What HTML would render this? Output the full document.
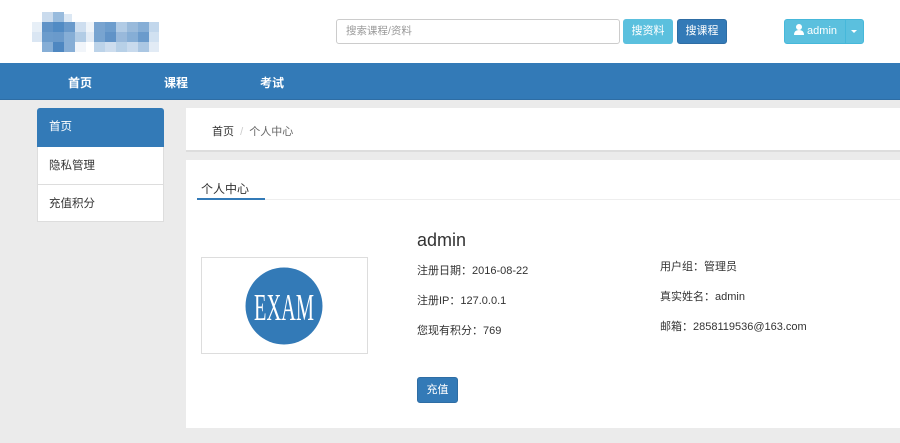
<!DOCTYPE html>
<html><head><meta charset="utf-8"><style>
*{box-sizing:border-box;margin:0;padding:0}
body{width:900px;height:443px;overflow:hidden;background:#ebebeb;font-family:"Liberation Sans","Noto Sans CJK SC",sans-serif;font-size:11px;color:#333;position:relative}
.a{position:absolute}
.hdr{left:0;top:0;width:900px;height:63px;background:#fff}
.nav{left:0;top:63px;width:900px;height:37px;background:#337ab7;border-bottom:1px solid #2e6da4}
.nav span{position:absolute;top:11px;color:#fff;font-weight:bold;font-size:12px}
.btn{border-radius:3px;color:#fff;font-size:11px;text-align:center;line-height:24px;height:25px}
.side div{height:38px;line-height:38px;padding-left:11px;border:1px solid #ddd;border-top:none;background:#fff;width:127px;font-size:11.5px}
.lbl{font-size:11px;color:#333}
</style></head><body>
<div class="a hdr"></div>
<svg class="a" style="left:30px;top:12px" width="130" height="42">
<g opacity="0.9">
<rect x="12" y="0" width="11" height="10" fill="#c5d8ec"/><rect x="23" y="0" width="11" height="10" fill="#8db4da"/><rect x="34" y="2" width="8" height="8" fill="#d9e6f3"/>
<rect x="2" y="10" width="10" height="10" fill="#e5eef7"/><rect x="12" y="10" width="11" height="10" fill="#4f88c2"/><rect x="23" y="10" width="11" height="10" fill="#3f7fbe"/><rect x="34" y="10" width="11" height="10" fill="#5a90c6"/><rect x="45" y="10" width="11" height="10" fill="#c9dbee"/><rect x="56" y="10" width="8" height="10" fill="#eef3f9"/><rect x="64" y="10" width="11" height="10" fill="#6b9bcc"/><rect x="75" y="10" width="11" height="10" fill="#5e93c8"/><rect x="86" y="10" width="11" height="10" fill="#a9c6e3"/><rect x="97" y="10" width="11" height="10" fill="#8fb3d8"/><rect x="108" y="10" width="11" height="10" fill="#7aa6d2"/><rect x="119" y="10" width="10" height="10" fill="#bcd3ea"/>
<rect x="2" y="20" width="10" height="10" fill="#d6e4f2"/><rect x="12" y="20" width="11" height="10" fill="#5d92c7"/><rect x="23" y="20" width="11" height="10" fill="#5a90c6"/><rect x="34" y="20" width="11" height="10" fill="#7aa6d2"/><rect x="45" y="20" width="11" height="10" fill="#aac7e3"/><rect x="56" y="20" width="8" height="10" fill="#dfe9f4"/><rect x="64" y="20" width="11" height="10" fill="#6a9bcc"/><rect x="75" y="20" width="11" height="10" fill="#5088c2"/><rect x="86" y="20" width="11" height="10" fill="#8eb2d8"/><rect x="97" y="20" width="11" height="10" fill="#7aa6d2"/><rect x="108" y="20" width="11" height="10" fill="#5b91c7"/><rect x="119" y="20" width="10" height="10" fill="#cddef0"/>
<rect x="12" y="30" width="11" height="10" fill="#7aa6d2"/><rect x="23" y="30" width="11" height="10" fill="#3b7bbb"/><rect x="34" y="30" width="11" height="10" fill="#7ba6d2"/><rect x="45" y="30" width="11" height="10" fill="#f0f5fa"/><rect x="64" y="30" width="11" height="10" fill="#b5cfe7"/><rect x="75" y="30" width="11" height="10" fill="#c8daed"/><rect x="86" y="30" width="11" height="10" fill="#b0cbe5"/><rect x="97" y="30" width="11" height="10" fill="#c3d7ec"/><rect x="108" y="30" width="11" height="10" fill="#a2c1e1"/><rect x="119" y="30" width="10" height="10" fill="#dfe9f4"/>
</g></svg>
<div class="a" style="left:336px;top:19px;width:284px;height:25px;border:1px solid #ccc;border-radius:3px;background:#fff;padding-left:9px;line-height:23px;color:#999;font-size:10.5px">搜索课程/资料</div>
<div class="a btn" style="left:623px;top:19px;width:50px;background:#5bc0de">搜资料</div>
<div class="a btn" style="left:677px;top:19px;width:50px;background:#337ab7;border:1px solid #2e6da4;line-height:23px">搜课程</div>
<div class="a btn" style="left:784px;top:19px;width:80px;background:#5bc0de;border:1px solid #46b8da;line-height:23px;text-align:left;padding-left:9px">
<svg width="10" height="11" style="vertical-align:-1px"><circle cx="5" cy="3" r="3" fill="#fff"/><path d="M0 11 Q0 6 5 6 Q10 6 10 11Z" fill="#fff"/></svg> admin</div>
<div class="a" style="left:845px;top:20px;width:1px;height:23px;background:#46b8da"></div>
<div class="a" style="left:851px;top:30px;border-left:3px solid transparent;border-right:3px solid transparent;border-top:3px solid #fff"></div>
<div class="a nav"><span style="left:68px">首页</span><span style="left:164px">课程</span><span style="left:260px">考试</span></div>
<div class="a side" style="left:37px;top:108px">
<div style="background:#337ab7;color:#fff;border-color:#337ab7;border-radius:3px 3px 0 0;height:39px">首页</div>
<div>隐私管理</div><div style="height:37px">充值积分</div></div>
<div class="a" style="left:186px;top:108px;width:714px;height:44px;background:#fff;border-bottom:2px solid #ddd;padding:15px 0 0 26px">首页 <span style="color:#ccc">&nbsp;/&nbsp;</span> <span style="color:#666">个人中心</span></div>
<div class="a" style="left:186px;top:160px;width:714px;height:268px;background:#fff"></div>
<div class="a" style="left:197px;top:199px;width:703px;height:1px;background:#eee"></div>
<div class="a" style="left:197px;top:198px;width:68px;height:2px;background:#337ab7"></div>
<div class="a" style="left:201px;top:180px;font-size:12px;color:#333">个人中心</div>
<div class="a" style="left:201px;top:257px;width:167px;height:97px;border:1px solid #ddd"></div>
<svg class="a" style="left:245px;top:267px" width="78" height="78"><circle cx="39" cy="39" r="38.5" fill="#337ab7"/><text x="39" y="53" text-anchor="middle" fill="#fff" font-family="Liberation Serif,serif" font-size="38" textLength="60" lengthAdjust="spacingAndGlyphs">EXAM</text></svg>
<div class="a" style="left:417px;top:230px;font-size:18px;color:#333">admin</div>
<div class="a lbl" style="left:417px;top:262px">注册日期：2016-08-22</div>
<div class="a lbl" style="left:417px;top:292px">注册IP：127.0.0.1</div>
<div class="a lbl" style="left:417px;top:322px">您现有积分：769</div>
<div class="a lbl" style="left:660px;top:258px">用户组：管理员</div>
<div class="a lbl" style="left:660px;top:288px">真实姓名：admin</div>
<div class="a lbl" style="left:660px;top:318px">邮箱：2858119536@163.com</div>
<div class="a btn" style="left:417px;top:377px;width:41px;height:26px;line-height:24px;background:#337ab7;border:1px solid #2e6da4;font-size:11px">充值</div>
</body></html>
